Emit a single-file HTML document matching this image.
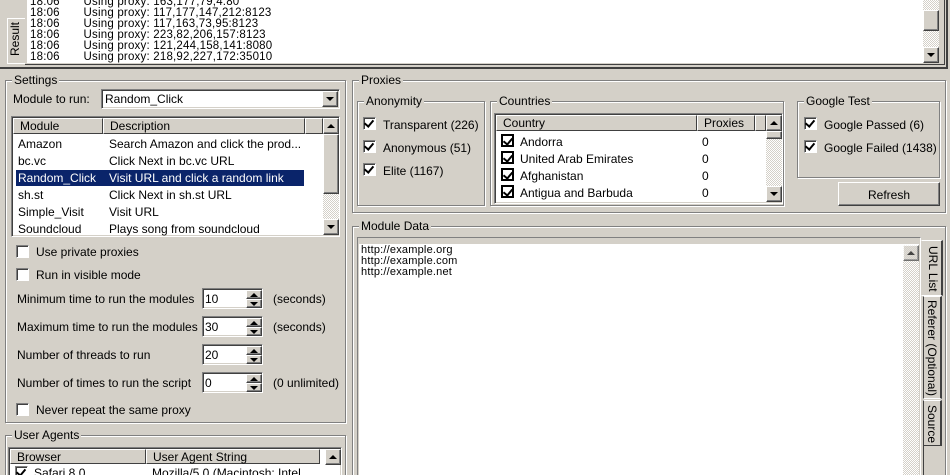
<!DOCTYPE html><html style="width:950px;height:475px;overflow:hidden"><head><style>
*{box-sizing:border-box;margin:0;padding:0}
body{width:950px;height:475px;background:#d4d0c8;font-family:"Liberation Sans",Tahoma,sans-serif;font-size:11px;color:#000;position:relative;overflow:hidden}
.a{position:absolute}
.grp{position:absolute;border:1px solid #808080;box-shadow:1px 1px 0 #fff inset,1px 1px 0 #fff}
.gl{position:absolute;background:#d4d0c8;padding:0 2px;top:-8px;left:6px;font-size:12px}
.sunk{position:absolute;background:#fff;border:1px solid;border-color:#808080 #fff #fff #808080;box-shadow:inset 1px 1px 0 #404040,inset -1px -1px 0 #d4d0c8}
.btn{position:absolute;background:#d4d0c8;border:1px solid;border-color:#fff #404040 #404040 #fff;box-shadow:inset -1px -1px 0 #808080}
.trk{position:absolute;background:repeating-conic-gradient(#d4d0c8 0 25%,#fff 0 50%) 0 0/2px 2px}
.cb{position:absolute;width:13px;height:13px;background:#fff;border:1px solid;border-color:#808080 #fff #fff #808080;box-shadow:inset 1px 1px 0 #404040}
.cb.on::after{content:"";position:absolute;left:2px;top:0px;width:4px;height:7px;border:solid #000;border-width:0 2px 2px 0;transform:rotate(40deg)}
.t{position:absolute;font-size:12px;white-space:nowrap}
.log{position:absolute;font-size:11.5px;line-height:11px;white-space:pre;letter-spacing:.2px}
.up::after,.dn::after{content:"";position:absolute;left:50%;top:50%;margin:-2px 0 0 -4px;border:4px solid transparent}
.up::after{border-bottom-color:#000;border-top-width:0}
.dn::after{border-top-color:#000;border-bottom-width:0}
.hd{position:absolute;background:#d4d0c8;border:1px solid;border-color:#fff #404040 #404040 #fff;font-size:12px;padding-left:6px;line-height:14px}
.vt{position:absolute;writing-mode:vertical-rl;font-size:12px;white-space:nowrap}
</style></head><body>
<div class="a" style="left:0;top:0;width:948px;height:69px;border-right:2px solid #404040;border-bottom:2px solid #404040;"></div>
<div class="a" style="left:25px;top:0;width:920px;height:65px;border-right:1px solid #404040;border-bottom:1px solid #404040"></div>
<div class="a" style="left:27px;top:0;width:896px;height:63px;background:#fff"></div>
<div class="log" style="left:30px;top:-3px">18:06       Using proxy: 163,177,79,4:80
18:06       Using proxy: 117,177,147,212:8123
18:06       Using proxy: 117,163,73,95:8123
18:06       Using proxy: 223,82,206,157:8123
18:06       Using proxy: 121,244,158,141:8080
18:06       Using proxy: 218,92,227,172:35010</div>
<div class="trk" style="left:923px;top:0;width:16px;height:63px"></div>
<div class="btn" style="left:923px;top:10px;width:16px;height:21px"></div>
<div class="btn dn" style="left:923px;top:47px;width:16px;height:16px"></div>
<div class="a" style="left:7px;top:18px;width:18px;height:46px;border:1px solid;border-color:#fff #404040 #fff #fff;border-right:none;background:#d4d0c8"></div>
<div class="vt" style="left:8px;top:22px;transform:rotate(180deg);font-size:12px">Result</div>

<div class="grp" style="left:5px;top:80px;width:341px;height:343px"><span class="gl">Settings</span></div>
<div class="t" style="left:13px;top:92px">Module to run:</div>
<div class="sunk" style="left:101px;top:89px;width:239px;height:20px"></div>
<div class="t" style="left:105px;top:92px">Random_Click</div>
<div class="btn dn" style="left:322px;top:91px;width:16px;height:16px"></div>
<div class="sunk" style="left:11px;top:116px;width:329px;height:121px"></div>
<div class="hd" style="left:13px;top:118px;width:90px;height:16px">Module</div>
<div class="hd" style="left:103px;top:118px;width:202px;height:16px">Description</div>
<div class="hd" style="left:305px;top:118px;width:18px;height:16px"></div>
<div class="trk" style="left:323px;top:118px;width:16px;height:117px"></div>
<div class="btn up" style="left:323px;top:118px;width:16px;height:16px"></div>
<div class="btn" style="left:323px;top:134px;width:16px;height:60px"></div>
<div class="btn dn" style="left:323px;top:219px;width:16px;height:16px"></div>
<div class="a" style="left:16px;top:170px;width:288px;height:16px;background:#0a246a"></div>
<div class="t" style="left:18px;top:136px;line-height:17px">Amazon<br>bc.vc<br><span style="color:#fff">Random_Click</span><br>sh.st<br>Simple_Visit<br>Soundcloud</div>
<div class="t" style="left:109px;top:136px;line-height:17px">Search Amazon and click the prod...<br>Click Next in bc.vc URL<br><span style="color:#fff">Visit URL and click a random link</span><br>Click Next in sh.st URL<br>Visit URL<br>Plays song from soundcloud</div>
<div class="cb" style="left:16px;top:245px"></div><div class="t" style="left:36px;top:245px">Use private proxies</div>
<div class="cb" style="left:16px;top:268px"></div><div class="t" style="left:36px;top:268px">Run in visible mode</div>
<div class="t" style="left:17px;top:292px">Minimum time to run the modules</div>
<div class="t" style="left:17px;top:320px">Maximum time to run the modules</div>
<div class="t" style="left:17px;top:348px">Number of threads to run</div>
<div class="t" style="left:17px;top:376px">Number of times to run the script</div>
<div class="sunk" style="left:202px;top:288px;width:61px;height:21px"></div><div class="t" style="left:205px;top:292px">10</div>
<div class="sunk" style="left:202px;top:316px;width:61px;height:21px"></div><div class="t" style="left:205px;top:320px">30</div>
<div class="sunk" style="left:202px;top:344px;width:61px;height:21px"></div><div class="t" style="left:205px;top:348px">20</div>
<div class="sunk" style="left:202px;top:372px;width:61px;height:21px"></div><div class="t" style="left:205px;top:376px">0</div>
<div class="btn up" style="left:246px;top:290px;width:16px;height:9px"></div><div class="btn dn" style="left:246px;top:299px;width:16px;height:9px"></div>
<div class="btn up" style="left:246px;top:318px;width:16px;height:9px"></div><div class="btn dn" style="left:246px;top:327px;width:16px;height:9px"></div>
<div class="btn up" style="left:246px;top:346px;width:16px;height:9px"></div><div class="btn dn" style="left:246px;top:355px;width:16px;height:9px"></div>
<div class="btn up" style="left:246px;top:374px;width:16px;height:9px"></div><div class="btn dn" style="left:246px;top:383px;width:16px;height:9px"></div>
<div class="t" style="left:273px;top:292px">(seconds)</div>
<div class="t" style="left:273px;top:320px">(seconds)</div>
<div class="t" style="left:273px;top:376px">(0 unlimited)</div>
<div class="cb" style="left:16px;top:403px"></div><div class="t" style="left:36px;top:403px">Never repeat the same proxy</div>

<div class="grp" style="left:5px;top:435px;width:341px;height:45px"><span class="gl">User Agents</span></div>
<div class="sunk" style="left:8px;top:447px;width:334px;height:35px"></div>
<div class="hd" style="left:10px;top:449px;width:136px;height:15px">Browser</div>
<div class="hd" style="left:146px;top:449px;width:174px;height:15px">User Agent String</div>
<div class="btn up" style="left:325px;top:449px;width:16px;height:16px"></div>
<div class="cb on" style="left:15px;top:466px"></div>
<div class="t" style="left:34px;top:466px">Safari 8.0</div>
<div class="t" style="left:152px;top:466px">Mozilla/5.0 (Macintosh; Intel</div>

<div class="grp" style="left:352px;top:80px;width:594px;height:133px"><span class="gl">Proxies</span></div>
<div class="grp" style="left:357px;top:101px;width:128px;height:105px"><span class="gl">Anonymity</span></div>
<div class="cb on" style="left:363px;top:117px"></div><div class="t" style="left:383px;top:118px">Transparent (226)</div>
<div class="cb on" style="left:363px;top:140px"></div><div class="t" style="left:383px;top:141px">Anonymous (51)</div>
<div class="cb on" style="left:363px;top:163px"></div><div class="t" style="left:383px;top:164px">Elite (1167)</div>
<div class="grp" style="left:490px;top:101px;width:294px;height:105px"><span class="gl">Countries</span></div>
<div class="sunk" style="left:494px;top:113px;width:289px;height:91px"></div>
<div class="hd" style="left:496px;top:115px;width:201px;height:16px">Country</div>
<div class="hd" style="left:697px;top:115px;width:58px;height:16px">Proxies</div>
<div class="hd" style="left:755px;top:115px;width:11px;height:16px"></div>
<div class="trk" style="left:766px;top:115px;width:16px;height:87px"></div>
<div class="btn up" style="left:766px;top:115px;width:16px;height:16px"></div>
<div class="btn" style="left:766px;top:131px;width:16px;height:8px"></div>
<div class="btn dn" style="left:766px;top:186px;width:16px;height:16px"></div>
<div class="cb on" style="left:501px;top:134px;border:2px solid #000;box-shadow:none"></div>
<div class="cb on" style="left:501px;top:151px;border:2px solid #000;box-shadow:none"></div>
<div class="cb on" style="left:501px;top:168px;border:2px solid #000;box-shadow:none"></div>
<div class="cb on" style="left:501px;top:185px;border:2px solid #000;box-shadow:none"></div>
<div class="t" style="left:520px;top:134px;line-height:17px">Andorra<br>United Arab Emirates<br>Afghanistan<br>Antigua and Barbuda</div>
<div class="t" style="left:702px;top:134px;line-height:17px">0<br>0<br>0<br>0</div>
<div class="grp" style="left:797px;top:101px;width:143px;height:77px"><span class="gl">Google Test</span></div>
<div class="cb on" style="left:804px;top:117px"></div><div class="t" style="left:824px;top:118px">Google Passed (6)</div>
<div class="cb on" style="left:804px;top:140px"></div><div class="t" style="left:824px;top:141px">Google Failed (1438)</div>
<div class="btn" style="left:838px;top:182px;width:102px;height:24px"></div>
<div class="t" style="left:868px;top:188px">Refresh</div>

<div class="grp" style="left:352px;top:226px;width:594px;height:254px"><span class="gl">Module Data</span></div>
<div class="a" style="left:357px;top:237px;width:564px;height:240px;border:1px solid;border-color:#808080 #fff #fff #808080"></div>
<div class="a" style="left:359px;top:244px;width:560px;height:231px;background:#fff"></div>
<div class="log" style="left:361px;top:245px;font-size:11px">http://example.org
http://example.com
http://example.net</div>
<div class="trk" style="left:903px;top:245px;width:16px;height:230px"></div>
<div class="btn up" style="left:903px;top:245px;width:16px;height:16px;opacity:.7"></div>
<div class="a" style="left:921px;top:240px;width:22px;height:56px;border:1px solid;border-color:#fff #404040 #fff #d4d0c8;border-right-width:2px"></div>
<div class="vt" style="left:926px;top:246px">URL List</div>
<div class="a" style="left:923px;top:296px;width:19px;height:103px;border:1px solid;border-color:#fff #404040 #fff #404040;border-right-width:2px"></div>
<div class="vt" style="left:925px;top:300px">Referer (Optional)</div>
<div class="a" style="left:923px;top:400px;width:19px;height:46px;border:1px solid;border-color:#fff #404040 #404040 #404040;border-right-width:2px"></div>
<div class="vt" style="left:925px;top:405px">Source</div>
<div class="a" style="left:923px;top:446px;width:1px;height:29px;background:#404040"></div>
</body></html>
